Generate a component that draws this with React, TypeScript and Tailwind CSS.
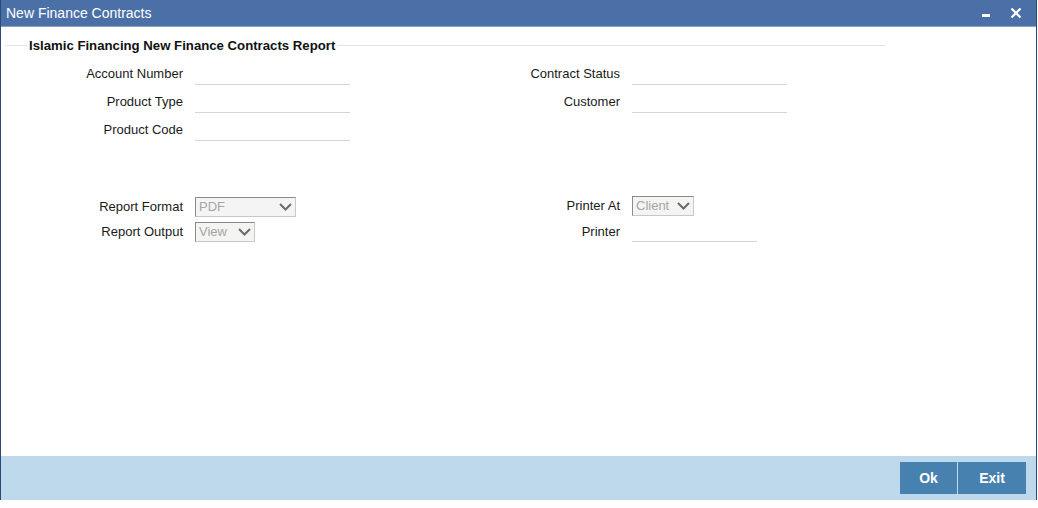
import type { ReactNode } from "react";

const font = { fontFamily: '"Liberation Sans", Arial, sans-serif' };

const Chevron = () => (
  <svg width="13" height="8" viewBox="0 0 13 8" className="shrink-0">
    <path d="M1 1 L6.5 6.5 L12 1" fill="none" stroke="#6b6b6b" strokeWidth="2" />
  </svg>
);

interface SelectBoxProps {
  value: string;
  width: string;
}

const SelectBox = ({ value, width }: SelectBoxProps) => (
  <div
    className={`flex h-[20px] items-center justify-between border border-[#c8c8c8] border-l-[#8a8a8a] border-t-[#8a8a8a] bg-[#f4f4f2] pl-[3px] pr-[3px] text-[13px] text-[#a6a6a6] ${width}`}
  >
    <span>{value}</span>
    <Chevron />
  </div>
);

const TextLine = ({ width = "w-[155px] mt-[2px]" }: { width?: string }) => (
  <div className={`h-[20px] border-b border-[#d4d4d4] ${width}`} />
);

interface FieldProps {
  label: string;
  labelWidth: string;
  children: ReactNode;
}

const Field = ({ label, labelWidth, children }: FieldProps) => (
  <div className="flex items-center gap-[12px]">
    <span className={`text-right text-[13px] text-[#1a1a1a] ${labelWidth}`}>{label}</span>
    {children}
  </div>
);

export default function App() {
  return (
    <div className="h-[508px] w-[1038px] overflow-hidden bg-white" style={font}>
      <div className="flex h-[500px] w-[1037px] flex-col border-l border-r border-[#2c4a78]">
        <header className="flex h-[27px] shrink-0 items-center justify-between border-b border-[#8fa3bc] bg-[#4a70a7] pl-[5px] pr-[14px]">
          <span className="text-[14px] text-white">New Finance Contracts</span>
          <div className="flex items-center gap-[20px]">
            <div className="mt-[4px] h-[3px] w-[8px] bg-white" />
            <svg width="12" height="12" viewBox="0 0 12 12">
              <path d="M1.5 1.5 L10.5 10.5 M10.5 1.5 L1.5 10.5" stroke="white" strokeWidth="2.2" />
            </svg>
          </div>
        </header>

        <main className="flex-1">
          <div className="mt-[9px] flex w-[884px] items-center">
            <div className="ml-[4px] h-px w-[22px] bg-[#e2e2e2]" />
            <span className="px-[2px] text-[13.2px] font-bold text-[#111]">
              Islamic Financing New Finance Contracts Report
            </span>
            <div className="h-px flex-1 bg-[#e2e2e2]" />
          </div>

          <div className="mt-[4px] flex flex-col">
            <div className="flex h-[28px] items-center">
              <div className="w-[349px]">
                <Field label="Account Number" labelWidth="w-[182px]">
                  <TextLine />
                </Field>
              </div>
              <Field label="Contract Status" labelWidth="w-[270px]">
                <TextLine />
              </Field>
            </div>
            <div className="flex h-[28px] items-center">
              <div className="w-[349px]">
                <Field label="Product Type" labelWidth="w-[182px]">
                  <TextLine />
                </Field>
              </div>
              <Field label="Customer" labelWidth="w-[270px]">
                <TextLine />
              </Field>
            </div>
            <div className="flex h-[28px] items-center">
              <div className="w-[349px]">
                <Field label="Product Code" labelWidth="w-[182px]">
                  <TextLine />
                </Field>
              </div>
            </div>
          </div>

          <div className="mt-[53px] flex flex-col gap-[5px]">
            <div className="flex items-center">
              <div className="w-[349px]">
                <Field label="Report Format" labelWidth="w-[182px]">
                  <SelectBox value="PDF" width="w-[101px]" />
                </Field>
              </div>
              <div className="-mt-[2px]">
                <Field label="Printer At" labelWidth="w-[270px]">
                  <SelectBox value="Client" width="w-[62px]" />
                </Field>
              </div>
            </div>
            <div className="flex items-center">
              <div className="w-[349px]">
                <Field label="Report Output" labelWidth="w-[182px]">
                  <SelectBox value="View" width="w-[60px]" />
                </Field>
              </div>
              <div>
                <Field label="Printer" labelWidth="w-[270px]">
                  <TextLine width="w-[125px]" />
                </Field>
              </div>
            </div>
          </div>
        </main>

        <footer className="flex h-[44px] shrink-0 items-center justify-end bg-[#bfd9ec] pr-[10px]">
          <div className="flex gap-px">
            <button type="button" className="h-[32px] w-[57px] bg-[#4781b0] text-[14px] font-bold text-white">
              Ok
            </button>
            <button type="button" className="h-[32px] w-[68px] bg-[#4781b0] text-[14px] font-bold text-white">
              Exit
            </button>
          </div>
        </footer>
      </div>
    </div>
  );
}
